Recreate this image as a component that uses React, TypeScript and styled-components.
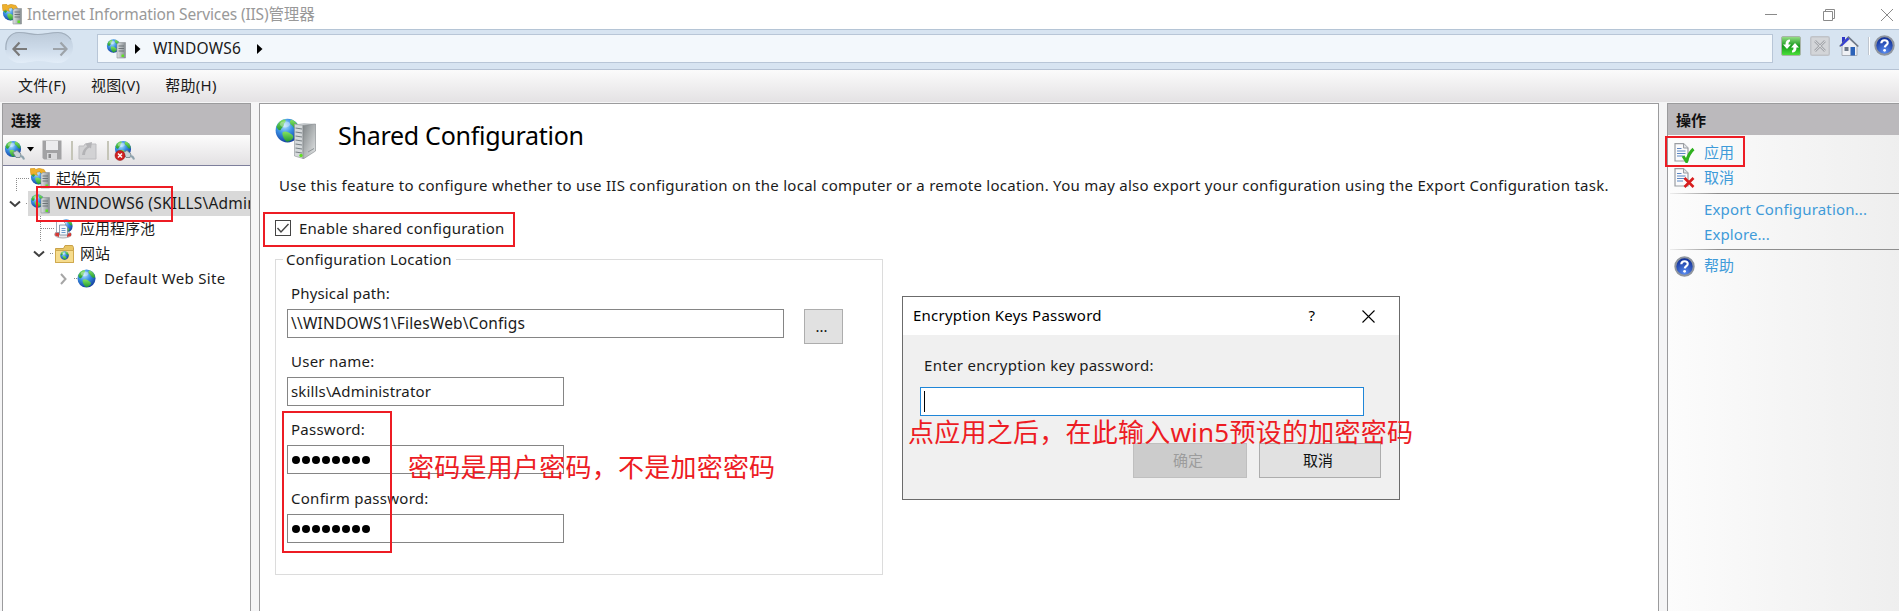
import React from "react";
import styled, { createGlobalStyle } from "styled-components";

const GlobalStyle = createGlobalStyle`
  * { box-sizing: border-box; }
  html, body { margin: 0; padding: 0; }
  body {
    font-family: "Noto Sans", "Noto Sans CJK SC", sans-serif;
    font-size: 15px;
    color: #1b1b1b;
    overflow: hidden;
  }
`;

const Window = styled.div`
  position: relative;
  width: 1899px;
  height: 611px;
  overflow: hidden;
  display: flex;
  flex-direction: column;
  background: #f5f5f6;
`;

const Text = styled.span<{ $size?: number; $ls?: number; $color?: string }>`
  display: block;
  font-size: ${(p) => p.$size ?? 15}px;
  letter-spacing: ${(p) => p.$ls ?? 0}px;
  color: ${(p) => p.$color ?? "inherit"};
  line-height: 22px;
  padding-bottom: 2px;
  white-space: nowrap;
`;

const TitleBar = styled.header`
  height: 29px;
  flex: none;
  display: flex;
  align-items: center;
  background: #fff;
  padding-left: 2px;
  gap: 5px;
`;

const WindowControls = styled.div`
  margin-left: auto;
  display: flex;
  gap: 46px;
  padding-right: 6px;
`;

const AddressBar = styled.div`
  height: 41px;
  flex: none;
  display: flex;
  align-items: flex-start;
  padding-left: 5px;
  background: #d7e4f1;
  border-top: 1px solid #b5c5d6;
  border-bottom: 1px solid #b5c2d3;
`;

const AddressField = styled.div`
  width: 1676px;
  height: 29px;
  margin: 4px 0 0 22px;
  padding-left: 8px;
  display: flex;
  align-items: center;
  background: #f3f8fc;
  border: 1px solid #b8c6d7;
`;

const AddressText = styled(Text)`
  margin: 0 16px 0 12px;
`;

const AddressTools = styled.div`
  display: flex;
  align-items: center;
  margin: 5px 0 0 8px;
  gap: 9px;
`;

const ToolDivider = styled.i`
  width: 2px;
  height: 18px;
  margin-right: -5px;
  background: #bfc6cf;
  border-right: 1px solid #fff;
`;

const MenuBar = styled.nav`
  height: 32px;
  flex: none;
  display: flex;
  align-items: center;
  gap: 25px;
  padding-left: 18px;
  background: linear-gradient(#fbfbfb, #e4e2e4);
`;

const Body = styled.div`
  flex: 1;
  display: flex;
  gap: 8px;
  padding: 1px 0 0 2px;
`;

const Panel = styled.section<{ $width: number }>`
  width: ${(p) => p.$width}px;
  flex: none;
  border: 1px solid #9b9b9d;
  border-bottom: 0;
  display: flex;
  flex-direction: column;
  background: #fff;
  overflow: hidden;
`;

const ActionsPanel = styled(Panel)`
  background: linear-gradient(90deg, #fcfcfc, #eeeeee);
  border-right: 0;
`;

const PanelHeader = styled.h2`
  margin: 0;
  height: 31px;
  flex: none;
  padding: 0 0 1px 8px;
  display: flex;
  align-items: center;
  background: #bbb9bc;
  font-size: 15px;
  font-weight: 700;
  color: #111;
`;

const PanelToolbar = styled.div`
  height: 31px;
  flex: none;
  display: flex;
  align-items: center;
  padding-left: 1px;
  background: linear-gradient(#fcfcfc, #e3e1e3);
  border-bottom: 1px solid #7d7f9c;
`;

const SmallDivider = styled.i<{ $ml: number; $mr: number }>`
  width: 2px;
  height: 19px;
  margin: 0 ${(p) => p.$mr}px 0 ${(p) => p.$ml}px;
  background: #c5c5b8;
`;

const Tree = styled.ul`
  list-style: none;
  margin: 0;
  padding: 0;
  display: flex;
  flex-direction: column;
`;

const TreeRow = styled.li<{ $indent: number }>`
  height: 25px;
  display: flex;
  align-items: center;
  padding-left: ${(p) => p.$indent}px;
`;

const TreeLabel = styled.div<{ $selected?: boolean; $gap?: number }>`
  height: 25px;
  flex: 1;
  min-width: 0;
  display: flex;
  align-items: center;
  gap: ${(p) => p.$gap ?? 6}px;
  padding-left: ${(p) => (p.$selected ? 2 : 0)}px;
  background: ${(p) => (p.$selected ? "#d9d9d9" : "transparent")};
`;

const Main = styled.main`
  display: flex;
  flex-direction: column;
  padding: 14px 0 0 15px;
`;

const PageHeading = styled.div`
  display: flex;
  align-items: center;
  height: 42px;
  gap: 22px;
`;

const Heading = styled.h1`
  margin: 0 0 8px;
  font-size: 25px;
  line-height: 34px;
  font-weight: 400;
  letter-spacing: -0.27px;
  color: #000;
  white-space: nowrap;
`;

const Description = styled.p`
  margin: 14px 0 0 4px;
  line-height: 24px;
  display: flex;
`;

const CheckRow = styled.label`
  display: flex;
  align-items: center;
  gap: 8px;
  height: 24px;
  margin-top: 18px;
  span { position: relative; top: 1px; }
`;

const GroupBox = styled.fieldset`
  width: 608px;
  height: 327px;
  margin: 8px 0 0;
  padding: 12px 0 0 11px;
  border: 1px solid #dcdcdc;
  min-width: 0;
  legend { padding: 2px 4px 0 3px; margin-left: -4px; height: 22px; display: flex; align-items: center; }
`;

const Field = styled.div<{ $gap: number }>`
  display: flex;
  flex-direction: column;
  margin-bottom: ${(p) => p.$gap}px;
`;

const FieldLabel = styled(Text)`
  margin: 0 0 3px 4px;
`;

const FieldLine = styled.div`
  display: flex;
  align-items: flex-start;
  gap: 20px;
  height: 29px;
`;

const Input = styled.div<{ $width: number }>`
  width: ${(p) => p.$width}px;
  height: 29px;
  display: flex;
  align-items: center;
  padding-left: 3px;
  border: 1px solid #858585;
  background: #fff;
`;

const Dots = styled.div`
  display: flex;
  gap: 2px;
  padding: 0 0 0 1px;
`;

const Dot = styled.i`
  width: 8px;
  height: 8px;
  border-radius: 50%;
  background: #000;
`;

const Button = styled.button<{ $width: number; $disabled?: boolean }>`
  width: ${(p) => p.$width}px;
  height: 35px;
  padding: 0 4px 0 0;
  display: flex;
  align-items: center;
  justify-content: center;
  font-family: inherit;
  border: 1px solid ${(p) => (p.$disabled ? "#bfbfbf" : "#adadad")};
  background: ${(p) => (p.$disabled ? "#cccccc" : "#e1e1e1")};
  color: ${(p) => (p.$disabled ? "#9c9c9c" : "#111")};
`;

const Action = styled.a<{ $mt?: number }>`
  height: 25px;
  flex: none;
  margin-top: ${(p) => p.$mt ?? 0}px;
  padding-left: 6px;
  display: flex;
  align-items: center;
  color: #3f9bd9;
`;

const ActionIcon = styled.span`
  width: 30px;
  height: 20px;
  flex: none;
`;

const Rule = styled.hr<{ $mt: number }>`
  margin: ${(p) => p.$mt}px 0 0 2px;
  width: 100%;
  height: 1px;
  flex: none;
  border: 0;
  background: linear-gradient(90deg, #eee, #8e8e8e 20%, #8e8e8e);
`;

const Dialog = styled.div`
  position: absolute;
  left: 902px;
  top: 296px;
  width: 498px;
  height: 204px;
  background: #f0f0f0;
  border: 1px solid #6b6b6b;
  display: flex;
  flex-direction: column;
`;

const DialogTitle = styled.div`
  height: 38px;
  flex: none;
  background: #fff;
  color: #000;
  display: flex;
  align-items: center;
  padding: 0 24px 0 10px;
`;

const DialogIcons = styled.div`
  margin-left: auto;
  display: flex;
  align-items: center;
  gap: 47px;
`;

const DialogBody = styled.div`
  padding: 19px 0 0 17px;
  display: flex;
  flex-direction: column;
`;

const DialogLabel = styled(Text)`
  margin: 0 0 9px 4px;
`;

const DialogInput = styled(Input)`
  border-color: #1f86d8;
`;

const Caret = styled.i`
  width: 1px;
  height: 21px;
  background: #000;
`;

const DialogButtons = styled.div`
  display: flex;
  gap: 12px;
  margin: 27px 0 0 213px;
`;

const Mark = styled.div<{ $x: number; $y: number; $w: number; $h: number }>`
  position: absolute;
  left: ${(p) => p.$x}px;
  top: ${(p) => p.$y}px;
  width: ${(p) => p.$w}px;
  height: ${(p) => p.$h}px;
  border: 2px solid #ed1c24;
`;

const Note = styled.div<{ $x: number; $y: number }>`
  position: absolute;
  left: ${(p) => p.$x}px;
  top: ${(p) => p.$y}px;
  font-size: 26px;
  line-height: 36px;
  letter-spacing: 0.24px;
  color: #ed1c24;
  white-space: nowrap;
`;

const Svg = styled.svg`
  display: block;
  flex: none;
`;

const Defs = () => (
  <Svg width="0" height="0">
    <defs>
      <radialGradient id="sea" cx=".38" cy=".3" r=".75">
        <stop offset="0" stopColor="#b4e4ff" />
        <stop offset=".45" stopColor="#3a90e4" />
        <stop offset="1" stopColor="#123a9a" />
      </radialGradient>
      <linearGradient id="land" x1="0" y1="0" x2="0" y2="1">
        <stop offset="0" stopColor="#86e460" />
        <stop offset="1" stopColor="#229a32" />
      </linearGradient>
      <linearGradient id="steel" x1="0" y1="0" x2="1" y2="0">
        <stop offset="0" stopColor="#dfe3e5" />
        <stop offset="1" stopColor="#858c90" />
      </linearGradient>
      <linearGradient id="side" x1="0" y1="0" x2="1" y2="1">
        <stop offset="0" stopColor="#7e8486" />
        <stop offset="1" stopColor="#e6e8e9" />
      </linearGradient>
      <radialGradient id="helpFill" cx=".5" cy=".85" r=".8">
        <stop offset="0" stopColor="#5b8df0" />
        <stop offset="1" stopColor="#0c2b94" />
      </radialGradient>
      <linearGradient id="greenBtn" x1="0" y1="0" x2="0" y2="1">
        <stop offset="0" stopColor="#9be08a" />
        <stop offset=".5" stopColor="#169a1c" />
        <stop offset="1" stopColor="#4be23a" />
      </linearGradient>
      <linearGradient id="cloud" x1="0" y1="0" x2="0" y2="1">
        <stop offset="0" stopColor="#bccad9" />
        <stop offset=".5" stopColor="#cbd9e8" />
        <stop offset="1" stopColor="#e2edf8" />
      </linearGradient>
    </defs>
  </Svg>
);

const GlobeShape = ({ x = 0, y = 0, s = 20 }: { x?: number; y?: number; s?: number }) => (
  <g transform={`translate(${x} ${y}) scale(${s / 20})`}>
    <circle cx="10" cy="10" r="9.5" fill="url(#sea)" />
    <path d="M1.2 7C2.5 3.5 5 1.5 8 1c1 1.500 .5 2.500-1 3.500 .5 2-1.500 3-2.500 5C3.500 10.500 2 9 1.200 7z" fill="url(#land)" />
    <path d="M13 1.200c3 1 5 3.300 6 6.300-.5 2-1.500 2.500-2.500 1.500C15 8.500 14.500 6 12.500 5c-1-1.500-.5-3 .5-3.800z" fill="url(#land)" />
    <path d="M6 11.500c2-1.500 4.500-.5 6.500 1 1.500 1 2.500 1.500 2 3.500-1.500 2-3.500 3-5 3C7.500 17.500 5.500 14 6 11.500z" fill="url(#land)" />
    <ellipse cx="8" cy="5" rx="4" ry="2.500" fill="#fff" opacity=".35" />
  </g>
);

const ServerShape = ({ x = 0, y = 0 }: { x?: number; y?: number }) => (
  <g transform={`translate(${x} ${y})`}>
    <path d="M0 1.500 2 0h6.500v15.500H0z" fill="url(#steel)" stroke="#8b9194" strokeWidth=".6" />
    <path d="M1.500 3.500h5.500M1.500 6h5.500M1.500 8.500h5.500" stroke="#6d7478" strokeWidth="1" />
    <rect x="4.500" y="12" width="2.500" height="2.500" fill="#5fe024" />
  </g>
);

const SiteServerIcon = ({ gold }: { gold?: boolean }) => (
  <Svg width="20" height="21" viewBox="0 0 20 21">
    <GlobeShape x={0.5} y={1} s={gold ? 16 : 14} />
    {gold && (
      <path d="M0 .8 4.500 0 5.500 1.500 9 .3 14 1.500 16 5 13 7 9.500 3.500 6.500 4.500 7.500 7.500 3.500 6 1 7z" fill="#eeb02c" stroke="#c98a18" strokeWidth=".5" />
    )}
    <ServerShape x={11} y={4.5} />
  </Svg>
);

const GlobeIcon = ({ size = 19 }: { size?: number }) => (
  <Svg width={size} height={size} viewBox="0 0 20 20"><GlobeShape /></Svg>
);

const ConnectIcon = ({ remove }: { remove?: boolean }) => (
  <Svg width="22" height="21" viewBox="0 0 22 21">
    <GlobeShape x={0.5} y={0.5} s={17} />
    <path d="M9 12.500 13 10.500l4 3.500-1 3.500-4 0z" fill="#c9d3d8" stroke="#6e7f87" strokeWidth=".8" />
    <path d="M16 16c2 0 3.500 1 4 3.500" fill="none" stroke="#8fa3ad" strokeWidth="2" />
    {remove && (
      <>
        <circle cx="6" cy="15.500" r="5" fill="#cf1f1f" stroke="#8f1010" strokeWidth=".5" />
        <path d="m4 13.500 4 4m0-4-4 4" stroke="#fff" strokeWidth="1.500" />
      </>
    )}
  </Svg>
);

const SaveIcon = () => (
  <Svg width="20" height="20" viewBox="0 0 20 20">
    <path d="M.5.500h19v19H2L.5 18z" fill="#a2a2a4" />
    <rect x="4" y="1" width="12" height="9" fill="#ececee" />
    <rect x="5" y="13" width="10" height="6.500" fill="#d8d8da" />
    <rect x="6.500" y="14" width="2.500" height="4" fill="#88888a" />
  </Svg>
);

const FolderUpIcon = () => (
  <Svg width="19" height="19" viewBox="0 0 19 19">
    <path d="M1 5h5l1-2h11v15H1z" fill="#d2d2d4" stroke="#bdbdc0" />
    <path d="M4 14c.5-4 2-6.500 5-8.500L7.500 2.500 14 1l-1 6.500L11.500 6.500C8.500 8 7 10.500 7 14z" fill="#b3b3b6" />
  </Svg>
);

const PoolIcon = () => (
  <Svg width="19" height="21" viewBox="0 0 19 21">
    <GlobeShape x={5} y={1} s={14} />
    <ellipse cx="9" cy="16.500" rx="8.500" ry="3.500" fill="#e9e9ec" stroke="#9a9aa0" strokeWidth=".8" />
    <path d="M1.500 14.500 5 13.500v5.500L1 17.500zM13 15.500l4-.5v3l-4 1z" fill="#d43a36" />
    <path d="M2.500 3.500h7l2 2v9h-9z" fill="#fff" stroke="#8795a6" strokeWidth=".8" />
    <path d="M5.500 7h6l2 2v8h-8z" fill="#f4f8fc" stroke="#74859a" strokeWidth=".8" />
    <path d="M7.500 10.500h4M7.500 12.500h4M7.500 14.500h4" stroke="#5e8fc4" strokeWidth=".9" />
  </Svg>
);

const SitesFolderIcon = () => (
  <Svg width="19" height="18" viewBox="0 0 19 18">
    <path d="M.5 3.500h8l1.500-3h7.500l1 2v15H.5z" fill="#e9c665" stroke="#c9a149" />
    <path d="M.5 5.500h18v12H.5z" fill="#f6dc8d" stroke="#cfa94f" />
    <GlobeShape x={5} y={6} s={9} />
  </Svg>
);

const BigServerIcon = () => (
  <Svg width="41" height="42" viewBox="0 0 41 42">
    <GlobeShape x={0} y={0} s={25} />
    <path d="M20 6.500 29 5l11.500 1-9.500 1.500z" fill="#c7cccf" />
    <path d="M19.500 6 28 7.500V40.500l-8.500-2.500z" fill="#d5d9db" stroke="#8e9598" strokeWidth=".6" />
    <path d="M28 7.500 40.500 6V33L29 40.500h-1z" fill="url(#side)" stroke="#7f8588" strokeWidth=".6" />
    <path d="m20.500 10 6.500 1m-6.500 3 6.500 1m-6.500 3 6.500 1m-6.500 3 6.500 1m-6.500 3 6.500 1m-6.500 3 6.500 1m-6.500 3 6.500 1" stroke="#777f84" strokeWidth="1.200" />
    <circle cx="26" cy="37.500" r="1.700" fill="#62df22" />
    <path d="m33 34 6-3.500" stroke="#8e9497" />
  </Svg>
);

const Triangle = () => (
  <Svg width="6" height="10" viewBox="0 0 6 10"><path d="M0 0l5.500 5L0 10z" fill="#000" /></Svg>
);

const NavArrows = () => (
  <Svg width="70" height="36" viewBox="0 0 70 36">
    <path d="M14 2c8 0 12 2 19 2S46 2 53 2c9 0 15 7 15 15s-6 16-15 16c-7 0-12-2-19-2s-11 2-19 2C6 33 0 26 0 18S6 2 14 2z" fill="url(#cloud)" />
    <path d="M1 20C0 9 6 2.500 14 2.500c8 0 12 2 19 2s13-2 20-2c6 0 10 3 13 7" fill="none" stroke="#a1aebc" strokeWidth="1.200" />
    <path d="M22 19H9M14.500 12.500 8.500 19l6 6.500" fill="none" stroke="#7a7a7a" strokeWidth="2.200" />
    <path d="M48 19h13M55.500 12.500l6 6.500-6 6.500" fill="none" stroke="#9da3a9" strokeWidth="2.200" />
  </Svg>
);

const RefreshIcon = () => (
  <Svg width="20" height="20" viewBox="0 0 20 20">
    <rect x=".5" y=".5" width="19" height="19" rx="1.500" fill="url(#greenBtn)" stroke="#a9b5a9" />
    <path d="M9 3.500C6 3.500 4.500 5 4.500 8.500H2l4 4.500 4-4.500H7.500c0-2 .5-2.700 1.500-3zM11 16.500c3 0 4.500-1.500 4.500-5H18L14 7l-4 4.500h2.500c0 2-.5 2.700-1.500 3z" fill="#fff" />
  </Svg>
);

const StopIcon = () => (
  <Svg width="20" height="20" viewBox="0 0 20 20">
    <rect x=".75" y=".75" width="18.500" height="18.500" rx="1.500" fill="#d3d5d8" stroke="#c0c3c8" strokeWidth="1.500" />
    <path d="m5 5 10 10m0-10L5 15" stroke="#a6a9ad" strokeWidth="2.500" />
    <path d="m5 5 10 10m0-10L5 15" stroke="#dfe1e3" strokeWidth=".8" />
  </Svg>
);

const HomeIcon = () => (
  <Svg width="20" height="20" viewBox="0 0 20 20">
    <path d="M3 1h3v6H3z" fill="#2d36c8" />
    <path d="M3 10 10.500 3 18 10v9.500H3z" fill="#eef0f4" stroke="#9a9fa8" strokeWidth=".8" />
    <path d="M.7 10.500 9.500 1.200 19.300 10.500" fill="none" stroke="#707986" strokeWidth="1.700" />
    <path d="m1 10 7.500-8.500 2 1.500L3 10z" fill="#333dd8" />
    <rect x="11.500" y="11" width="4.500" height="8.500" fill="#2b62b8" />
    <rect x="5.500" y="11" width="4" height="4" fill="#6b7686" />
  </Svg>
);

const HelpIcon = () => (
  <Svg width="21" height="21" viewBox="0 0 21 21">
    <circle cx="10.500" cy="10.500" r="9.200" fill="url(#helpFill)" stroke="#8f959e" strokeWidth="2" />
    <path d="M7.300 8.300c.2-4 6.600-4 6.400-.3-.1 2.200-2.700 2.200-2.900 4.400" fill="none" stroke="#fff" strokeWidth="2.200" />
    <circle cx="10.600" cy="15.300" r="1.400" fill="#fff" />
  </Svg>
);

const DocIcon = ({ ok }: { ok?: boolean }) => (
  <Svg width="21" height="20" viewBox="0 0 21 20">
    <path d="M1 .7h8.500L14 5v13H1z" fill="#fbfbfc" stroke="#9a9da2" strokeWidth="1.200" />
    <path d="M9.500.700V5H14" fill="#e3e5e8" stroke="#9a9da2" />
    <path d="M3 5.500h4.500M3 8h8.500M3 10.500h8.500M3 13h6" stroke="#5d87c2" strokeWidth="1.200" />
    {ok ? (
      <path d="m9 13 3.500 5.500C14 13 16 9 19.500 6" fill="none" stroke="#2fb11f" strokeWidth="3" />
    ) : (
      <path d="m10.500 10 9 9m0-9-9 9" stroke="#d81e1e" strokeWidth="2.600" />
    )}
  </Svg>
);

const Chevron = ({ open }: { open?: boolean }) => (
  <Svg width="12" height="12" viewBox="0 0 12 12">
    {open ? (
      <path d="m1 3.500 5 4.500 5-4.500" fill="none" stroke="#404040" strokeWidth="2" />
    ) : (
      <path d="m4 1 4.500 5-4.500 5" fill="none" stroke="#a6a6a6" strokeWidth="2" />
    )}
  </Svg>
);

const Branch = ({ w, d }: { w: number; d: string }) => (
  <Svg width={w} height="25" viewBox={`0 0 ${w} 25`}>
    <path d={d} fill="none" stroke="#8c8c8c" strokeDasharray="1 1" shapeRendering="crispEdges" />
  </Svg>
);

const Password = () => (
  <Input $width={277}>
    <Dots>{Array.from({ length: 8 }, (_, i) => <Dot key={i} />)}</Dots>
  </Input>
);

export default function App() {
  return (
    <Window>
      <GlobalStyle />
      <TitleBar>
        <SiteServerIcon gold />
        <Text $size={15.5} $ls={-0.15} $color="#999">Internet Information Services (IIS)管理器</Text>
        <WindowControls>
          <Svg width="12" height="12" viewBox="0 0 12 12"><path d="M0 5.500h12" stroke="#8a8a8a" /></Svg>
          <Svg width="12" height="12" viewBox="0 0 12 12"><path d="M.5 2.500h9v9h-9zM2.500 2.500v-2h9v9h-2" fill="none" stroke="#8a8a8a" /></Svg>
          <Svg width="12" height="12" viewBox="0 0 12 12"><path d="m0 0 12 12M12 0 0 12" stroke="#8a8a8a" /></Svg>
        </WindowControls>
      </TitleBar>
      <AddressBar>
        <NavArrows />
        <AddressField>
          <SiteServerIcon />
          <Svg width="9" height="10" />
          <Triangle />
          <AddressText $size={15.5} $ls={0.2}>WINDOWS6</AddressText>
          <Triangle />
        </AddressField>
        <AddressTools>
          <RefreshIcon />
          <StopIcon />
          <HomeIcon />
          <ToolDivider />
          <HelpIcon />
        </AddressTools>
      </AddressBar>
      <MenuBar>
        <Text $ls={0.25}>文件(F)</Text>
        <Text $ls={0.25}>视图(V)</Text>
        <Text $ls={0.25}>帮助(H)</Text>
      </MenuBar>
      <Body>
        <Panel $width={249}>
          <PanelHeader>连接</PanelHeader>
          <PanelToolbar>
            <ConnectIcon />
            <Svg width="16" height="6" viewBox="0 0 16 6"><path d="M1 0h7L4.500 4.500z" fill="#000" /></Svg>
            <SaveIcon />
            <SmallDivider $ml={9} $mr={5} />
            <FolderUpIcon />
            <SmallDivider $ml={10} $mr={5} />
            <ConnectIcon remove />
          </PanelToolbar>
          <Tree>
            <TreeRow $indent={12}>
              <Branch w={15} d="M1.500 25V12.500H15" />
              <TreeLabel><SiteServerIcon gold /><Text>起始页</Text></TreeLabel>
            </TreeRow>
            <TreeRow $indent={6}>
              <Chevron open />
              <Branch w={7} d="M5 12.500h2" />
              <TreeLabel $selected><SiteServerIcon /><Text $size={15.5} $ls={0.2}>WINDOWS6 (SKILLS\Administrator)</Text></TreeLabel>
            </TreeRow>
            <TreeRow $indent={36}>
              <Branch w={15} d="M1.500 0v25M1.500 12.500H15" />
              <TreeLabel $gap={7}><PoolIcon /><Text>应用程序池</Text></TreeLabel>
            </TreeRow>
            <TreeRow $indent={30}>
              <Chevron open />
              <Branch w={10} d="M5 12.500h4" />
              <TreeLabel><SitesFolderIcon /><Text>网站</Text></TreeLabel>
            </TreeRow>
            <TreeRow $indent={54}>
              <Chevron />
              <Branch w={8} d="M5 12.500h4" />
              <TreeLabel $gap={8}><GlobeIcon /><Text $ls={0.3}>Default Web Site</Text></TreeLabel>
            </TreeRow>
          </Tree>
        </Panel>
        <Panel $width={1400}>
          <Main>
            <PageHeading>
              <BigServerIcon />
              <Heading>Shared Configuration</Heading>
            </PageHeading>
            <Description>
              <Text $ls={0.27}>Use this feature to configure whether to use IIS configuration on the local computer or a remote location. You may also export your configuration using the Export Configuration task.</Text>
            </Description>
            <CheckRow>
              <Svg width="16" height="16" viewBox="0 0 16 16">
                <rect x=".5" y=".5" width="15" height="15" fill="#fff" stroke="#444" />
                <path d="m2.500 8 3.500 4 7.500-8" fill="none" stroke="#444" strokeWidth="1.400" />
              </Svg>
              <Text $ls={0.25}>Enable shared configuration</Text>
            </CheckRow>
            <GroupBox>
              <legend><Text $ls={0.2}>Configuration Location</Text></legend>
              <Field $gap={12}>
                <FieldLabel $ls={0.15}>Physical path:</FieldLabel>
                <FieldLine>
                  <Input $width={497}><Text $size={15.5} $ls={0.18}>\\WINDOWS1\FilesWeb\Configs</Text></Input>
                  <Button $width={39}><Text>...</Text></Button>
                </FieldLine>
              </Field>
              <Field $gap={12}>
                <FieldLabel $ls={0.25}>User name:</FieldLabel>
                <Input $width={277}><Text $ls={0.15}>skills\Administrator</Text></Input>
              </Field>
              <Field $gap={13}>
                <FieldLabel $ls={0.25}>Password:</FieldLabel>
                <Password />
              </Field>
              <Field $gap={0}>
                <FieldLabel $ls={0.27}>Confirm password:</FieldLabel>
                <Password />
              </Field>
            </GroupBox>
          </Main>
        </Panel>
        <ActionsPanel $width={240}>
          <PanelHeader>操作</PanelHeader>
          <Action $mt={5}><ActionIcon><DocIcon ok /></ActionIcon><Text>应用</Text></Action>
          <Action><ActionIcon><DocIcon /></ActionIcon><Text>取消</Text></Action>
          <Rule $mt={3} />
          <Action $mt={3}><ActionIcon /><Text $ls={0.16}>Export Configuration...</Text></Action>
          <Action><ActionIcon /><Text $ls={0.1}>Explore...</Text></Action>
          <Rule $mt={2} />
          <Action $mt={3}><ActionIcon><HelpIcon /></ActionIcon><Text>帮助</Text></Action>
        </ActionsPanel>
      </Body>
      <Dialog>
        <DialogTitle>
          <Text $ls={0.22}>Encryption Keys Password</Text>
          <DialogIcons>
            <Text>?</Text>
            <Svg width="13" height="13" viewBox="0 0 13 13"><path d="m.5.500 12 12m0-12-12 12" stroke="#000" strokeWidth="1.100" /></Svg>
          </DialogIcons>
        </DialogTitle>
        <DialogBody>
          <DialogLabel $ls={0.3}>Enter encryption key password:</DialogLabel>
          <DialogInput $width={444}><Caret /></DialogInput>
          <DialogButtons>
            <Button $width={114} $disabled><Text>确定</Text></Button>
            <Button $width={122}><Text>取消</Text></Button>
          </DialogButtons>
        </DialogBody>
      </Dialog>
      <Mark $x={36} $y={186} $w={137} $h={36} />
      <Mark $x={263} $y={212} $w={252} $h={35} />
      <Mark $x={282} $y={411} $w={110} $h={142} />
      <Mark $x={1665} $y={136} $w={80} $h={31} />
      <Note $x={408} $y={449}>密码是用户密码，不是加密密码</Note>
      <Note $x={908} $y={414}>点应用之后，在此输入win5预设的加密密码</Note>
      <Defs />
    </Window>
  );
}
